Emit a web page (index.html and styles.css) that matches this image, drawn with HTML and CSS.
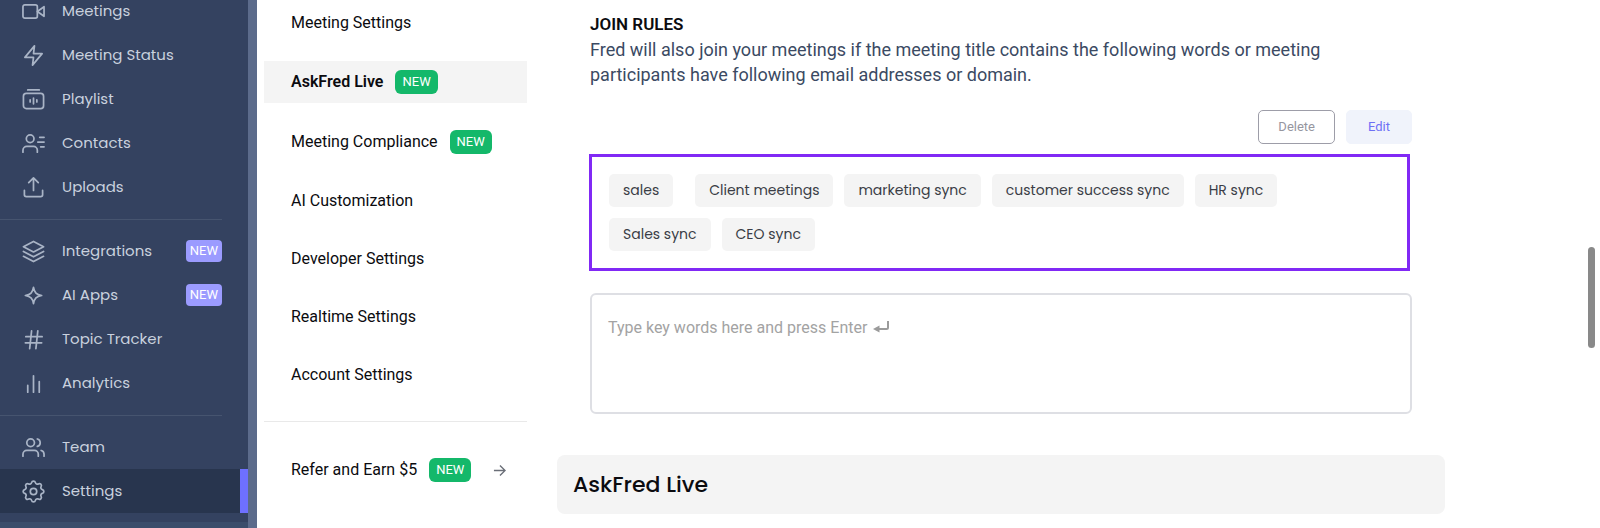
FILE: index.html
```html
<!DOCTYPE html>
<html lang="en">
<head>
<meta charset="utf-8">
<title>Settings – AskFred Live</title>
<link rel="stylesheet" href="styles.css">
</head>
<body>
<div class="app">
  <nav class="sidebar" aria-label="Main">
    <div class="sidebar-scroll">
      <a class="nav-item" href="#"><svg class="icon" viewBox="0 0 24 24"><rect x="1" y="5" width="15" height="14" rx="2"/><path d="M23 7l-7 5 7 5z"/></svg><span>Meetings</span></a>
      <a class="nav-item" href="#"><svg class="icon" viewBox="0 0 24 24"><path d="M13 2L3 14h9l-1 8 10-12h-9z"/></svg><span>Meeting Status</span></a>
      <a class="nav-item" href="#"><svg class="icon" viewBox="0 0 24 24"><path d="M6 2h12"/><rect x="1.5" y="5.500" width="21" height="16" rx="3"/><path d="M8.500 12.500v2M12 10.500v6M15.500 12.500v2"/></svg><span>Playlist</span></a>
      <a class="nav-item" href="#"><svg class="icon" viewBox="0 0 24 24"><circle cx="8.500" cy="7" r="4"/><path d="M1 21v-2a4 4 0 0 1 4-4h7a4 4 0 0 1 4 4v2M18.500 5.500H23M16.500 10.500H23M19.500 15.500H23"/></svg><span>Contacts</span></a>
      <a class="nav-item" href="#"><svg class="icon" viewBox="0 0 24 24"><path d="M2.500 15v4.500a2 2 0 0 0 2 2h15a2 2 0 0 0 2-2V15M17 7l-5-5-5 5M12 2v13"/></svg><span>Uploads</span></a>
      <hr class="nav-divider">
      <a class="nav-item" href="#"><svg class="icon" viewBox="0 0 24 24"><path d="M12 1.500L1.500 7 12 12.500 22.500 7zM1.500 17L12 22.500 22.500 17M1.500 12L12 17.500 22.500 12"/></svg><span>Integrations</span><span class="tag">NEW</span></a>
      <a class="nav-item" href="#"><svg class="icon" viewBox="0 0 24 24"><path d="M12 3.500C13 9 15 11 20.500 12C15 13 13 15 12 20.500C11 15 9 13 3.500 12C9 11 11 9 12 3.500z"/></svg><span>AI Apps</span><span class="tag">NEW</span></a>
      <a class="nav-item" href="#"><svg class="icon" viewBox="0 0 24 24"><path d="M4 9h17M3.500 15.500h17M10 3L8 21.500M16.500 3l-2 18.500"/></svg><span>Topic Tracker</span></a>
      <a class="nav-item" href="#"><svg class="icon" viewBox="0 0 24 24"><path d="M6 21v-7M12 21V4M18 21V10"/></svg><span>Analytics</span></a>
      <hr class="nav-divider">
      <a class="nav-item" href="#"><svg class="icon" viewBox="0 0 24 24"><path d="M17 21v-2a4 4 0 0 0-4-4H5a4 4 0 0 0-4 4v2"/><circle cx="9" cy="7" r="4"/><path d="M23 21v-2a4 4 0 0 0-3-3.870M16 3.130a4 4 0 0 1 0 7.750"/></svg><span>Team</span></a>
      <a class="nav-item nav-item-active" href="#" aria-current="page"><svg class="icon icon-gear" viewBox="2 2 20 20"><circle cx="12" cy="12" r="2.800"/><path d="M10.325 4.317c.426-1.756 2.924-1.756 3.350 0a1.724 1.724 0 0 0 2.573 1.066c1.543-.94 3.310.826 2.370 2.370a1.724 1.724 0 0 0 1.065 2.572c1.756.426 1.756 2.924 0 3.350a1.724 1.724 0 0 0-1.066 2.573c.94 1.543-.826 3.310-2.370 2.370a1.724 1.724 0 0 0-2.572 1.065c-.426 1.756-2.924 1.756-3.350 0a1.724 1.724 0 0 0-2.573-1.066c-1.543.94-3.310-.826-2.370-2.370a1.724 1.724 0 0 0-1.065-2.572c-1.756-.426-1.756-2.924 0-3.350a1.724 1.724 0 0 0 1.066-2.573c-.94-1.543.826-3.310 2.370-2.370c1 .608 2.296.07 2.572-1.065z"/></svg><span>Settings</span></a>
    </div>
    <div class="sidebar-footer"></div>
  </nav>

  <nav class="subnav" aria-label="Settings">
    <a class="sub-item" href="#">Meeting Settings</a>
    <a class="sub-item sub-item-active" href="#" aria-current="page">AskFred Live <span class="badge">NEW</span></a>
    <a class="sub-item" href="#">Meeting Compliance <span class="badge">NEW</span></a>
    <a class="sub-item" href="#">AI Customization</a>
    <a class="sub-item" href="#">Developer Settings</a>
    <a class="sub-item" href="#">Realtime Settings</a>
    <a class="sub-item" href="#">Account Settings</a>
    <hr class="sub-divider">
    <a class="sub-item" href="#">Refer and Earn $5 <span class="badge">NEW</span><svg class="arrow" viewBox="0 0 14 14"><path d="M1 7h11.500M7.500 1.500L13 7l-5.500 5.500"/></svg></a>
  </nav>

  <main class="main">
    <section class="rules">
      <h2 class="rules-title">JOIN RULES</h2>
      <p class="rules-text">Fred will also join your meetings if the meeting title contains the following words or meeting participants have following email addresses or domain.</p>
      <div class="actions">
        <button class="btn btn-outline" type="button">Delete</button>
        <button class="btn btn-soft" type="button">Edit</button>
      </div>
      <ul class="chips">
        <li class="chip chip-first">sales</li>
        <li class="chip">Client meetings</li>
        <li class="chip">marketing sync</li>
        <li class="chip">customer success sync</li>
        <li class="chip">HR sync</li>
        <li class="chip">Sales sync</li>
        <li class="chip">CEO sync</li>
      </ul>
      <div class="keywords">
        <textarea class="keywords-input" aria-label="Key words" placeholder="Type key words here and press Enter"></textarea>
        <svg class="enter" viewBox="0 0 16 12"><path class="enter-line" d="M15 0v6.500a1.500 1.500 0 0 1-1.500 1.500H5"/><path class="enter-head" d="M0 8l6.500-3.500v7z"/></svg>
      </div>
    </section>
    <h2 class="section-title">AskFred Live</h2>
  </main>
  <div class="scroll-thumb"></div>
</div>
</body>
</html>
```

FILE: styles.css
```css
* { box-sizing: border-box; }

body {
  margin: 0;
  font-family: Roboto, "Liberation Sans", sans-serif;
  color: #0b0b0f;
  background: #fff;
}

a { color: inherit; text-decoration: none; }

.app {
  display: flex;
  position: relative;
  height: 100vh;
  overflow: hidden;
}

.sidebar {
  display: flex;
  flex-direction: column;
  flex: none;
  width: 257px;
  border-right: 9px solid #5c6b8b;
  background: #344260;
  color: #c9d1de;
  font: 15px/20px Poppins, Inter, sans-serif;
}

.sidebar-scroll { margin-top: -11px; }

.nav-item {
  display: flex;
  align-items: center;
  gap: 17px;
  height: 44px;
  padding: 0 26px 0 22px;
}

.nav-item-active {
  background: #28354e;
  box-shadow: inset -8px 0 #6e70ff;
}

.icon {
  flex: none;
  width: 23px;
  height: 23px;
  fill: none;
  stroke: #a9b4c6;
  stroke-width: 1.8;
  stroke-linecap: round;
  stroke-linejoin: round;
}

.icon-gear { stroke-width: 1.5; }

.nav-divider {
  height: 1px;
  margin: 10px 26px 9px 0;
  border: 0;
  background: #46546f;
}

.tag {
  margin-left: auto;
  padding: 0 4px;
  border-radius: 4px;
  background: #9b9bff;
  color: #fff;
  font: 13px/22px Roboto, sans-serif;
}

.sidebar-footer {
  flex: 1;
  margin-top: 9px;
  background: #3b4d6b;
}

.subnav {
  display: flex;
  flex-direction: column;
  flex: none;
  gap: 18px;
  width: 270px;
  padding: 3px 0 0 7px;
  font-size: 16px;
}

.sub-item {
  display: flex;
  align-items: center;
  gap: 12px;
  padding: 9px 21px 9px 27px;
  line-height: 22px;
  white-space: nowrap;
}

.sub-item-active { background: #f4f4f4; font-weight: 600; }

.badge {
  padding: 0 7px;
  border-radius: 6px;
  background: #14b86a;
  color: #fff;
  font-size: 13px;
  font-weight: 400;
  line-height: 24px;
}

.arrow {
  width: 13px;
  height: 13px;
  margin-left: auto;
  fill: none;
  stroke: #6b6f78;
  stroke-width: 1.5;
}

.sub-divider {
  width: 100%;
  height: 1px;
  margin: 8px 0 9px;
  border: 0;
  background: #e9e9e9;
}

.main {
  flex: 1;
  min-width: 0;
  padding: 12px 155px 0 30px;
}

.rules { padding: 0 33px; }

.rules-title {
  margin: 0;
  font-size: 17px;
  font-weight: 600;
  line-height: 25px;
}

.rules-text {
  max-width: 760px;
  margin: 0;
  color: #3b4a63;
  font-size: 18px;
  line-height: 25px;
}

.actions {
  display: flex;
  justify-content: flex-end;
  gap: 11px;
  margin: 23px 0 10px;
}

.btn {
  padding: 7px 19px;
  border: 1px solid #9d9da8;
  border-radius: 5px;
  background: #fff;
  color: #96969f;
  font: 13px/18px Roboto, sans-serif;
}

.btn-soft {
  padding: 7px 21px;
  border-color: #f0f3fb;
  background: #f0f3fb;
  color: #6e70f5;
}

.chips {
  display: flex;
  flex-wrap: wrap;
  gap: 11px;
  margin: 0 2px 0 -1px;
  padding: 17px 48px 17px 17px;
  border: 3px solid #8129f5;
  list-style: none;
}

.chip {
  padding: 0 14px;
  border-radius: 5px;
  background: #f4f4f4;
  color: #3a3d46;
  font: 14px/33px Poppins, Inter, sans-serif;
}

.chip-first { margin-right: 11px; }

.keywords { position: relative; margin-top: 22px; }

.keywords-input {
  display: block;
  width: 100%;
  height: 121px;
  padding: 22px 16px;
  border: 2px solid #dedfe4;
  border-radius: 6px;
  resize: none;
  color: #3b4a63;
  font: 16px/22px Roboto, sans-serif;
}

.keywords-input::placeholder { color: #a3a3a3; opacity: 1; }

.enter {
  position: absolute;
  top: 28px;
  left: 283px;
  width: 16px;
  height: 12px;
}

.enter-line { fill: none; stroke: #9b9b9b; stroke-width: 2; }
.enter-head { fill: #9b9b9b; }

.section-title {
  margin: 41px 0 0;
  padding: 14px 16px;
  border-radius: 8px;
  background: #f4f4f4;
  font: 500 22px/31px Poppins, Inter, sans-serif;
}

.scroll-thumb {
  position: absolute;
  top: 247px;
  right: 5px;
  width: 7px;
  height: 101px;
  border-radius: 4px;
  background: #898989;
}
```
